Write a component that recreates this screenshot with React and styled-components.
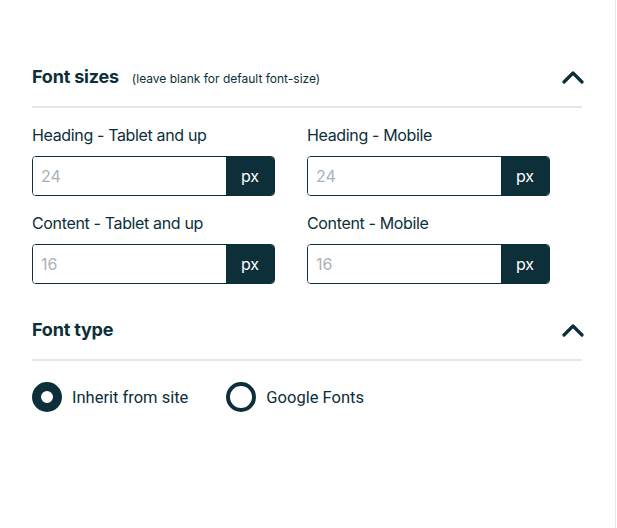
import React from 'react';
import styled, { createGlobalStyle } from 'styled-components';

const dark = '#0c2f3a';

const GlobalStyle = createGlobalStyle`
  html, body {
    margin: 0;
    padding: 0;
    background: #ffffff;
  }
  body {
    font-family: Inter, "Liberation Sans", sans-serif;
    color: ${dark};
  }
`;

const Page = styled.div`
  width: 616px;
  height: 528px;
  box-sizing: border-box;
  border-right: 1px solid #e6e8e9;
  padding: 60px 33px 0 32px;
`;

const Section = styled.section`
  & + & {
    margin-top: 29px;
  }
`;

const SectionHeader = styled.div`
  display: flex;
  align-items: center;
  justify-content: space-between;
  padding-bottom: 12px;
  border-bottom: 2px solid #e4e6e7;
`;

const TitleGroup = styled.div`
  display: flex;
  align-items: baseline;
  gap: 13px;
`;

const Title = styled.h2`
  margin: 0;
  font-size: 18px;
  font-weight: 700;
  letter-spacing: -0.2px;
  line-height: 34px;
`;

const Hint = styled.span`
  font-size: 12px;
  font-weight: 400;
`;

const Chevron = styled.button`
  display: flex;
  align-items: center;
  justify-content: center;
  width: 24px;
  height: 24px;
  padding: 0;
  margin-right: -3px;
  border: none;
  background: transparent;
  color: ${dark};
`;

const Grid = styled.div`
  display: grid;
  grid-template-columns: 243px 243px;
  column-gap: 32px;
  row-gap: 16px;
  padding-top: 16px;
`;

const Field = styled.div`
  display: flex;
  flex-direction: column;
  gap: 10px;
`;

const Label = styled.label`
  font-size: 16px;
  line-height: 22px;
  font-weight: 400;
  letter-spacing: -0.35px;
`;

const InputGroup = styled.div`
  display: flex;
  height: 40px;
  box-sizing: border-box;
  border: 1px solid ${dark};
  border-radius: 4px;
  overflow: hidden;
`;

const NumberInput = styled.input`
  flex: 1;
  min-width: 0;
  border: none;
  outline: none;
  padding: 0 8px;
  font-family: Inter, "Liberation Sans", sans-serif;
  font-size: 16px;
  color: ${dark};
  &::placeholder {
    color: #a9b2bb;
  }
`;

const Unit = styled.span`
  width: 48px;
  display: flex;
  align-items: center;
  justify-content: center;
  background: ${dark};
  color: #ffffff;
  font-size: 16px;
`;

const RadioRow = styled.div`
  display: flex;
  align-items: center;
  gap: 38px;
  padding-top: 21px;
`;

const RadioOption = styled.label`
  display: flex;
  align-items: center;
  gap: 10px;
  font-family: Roboto, Inter, sans-serif;
  font-size: 16.5px;
`;

const RadioDot = styled.span`
  width: 30px;
  height: 30px;
  box-sizing: border-box;
  border-radius: 50%;
  border: ${(p) => (p.checked ? '9px' : '4px')} solid ${dark};
`;

const ChevronUp = () => (
  <svg width="22" height="14" viewBox="0 0 22 14" fill="none">
    <path d="M2 12 L11 3 L20 12" stroke="currentColor" strokeWidth="3.2" strokeLinecap="round" strokeLinejoin="round" />
  </svg>
);

const fields = [
  { label: 'Heading - Tablet and up', placeholder: '24' },
  { label: 'Heading - Mobile', placeholder: '24' },
  { label: 'Content - Tablet and up', placeholder: '16' },
  { label: 'Content - Mobile', placeholder: '16' }
];

const App = () => (
  <>
    <GlobalStyle />
    <Page>
      <Section>
        <SectionHeader>
          <TitleGroup>
            <Title>Font sizes</Title>
            <Hint>(leave blank for default font-size)</Hint>
          </TitleGroup>
          <Chevron aria-label="Collapse">
            <ChevronUp />
          </Chevron>
        </SectionHeader>
        <Grid>
          {fields.map((f) => (
            <Field key={f.label}>
              <Label>{f.label}</Label>
              <InputGroup>
                <NumberInput type="text" placeholder={f.placeholder} />
                <Unit>px</Unit>
              </InputGroup>
            </Field>
          ))}
        </Grid>
      </Section>
      <Section>
        <SectionHeader>
          <Title>Font type</Title>
          <Chevron aria-label="Collapse">
            <ChevronUp />
          </Chevron>
        </SectionHeader>
        <RadioRow>
          <RadioOption>
            <RadioDot checked />
            Inherit from site
          </RadioOption>
          <RadioOption>
            <RadioDot />
            Google Fonts
          </RadioOption>
        </RadioRow>
      </Section>
    </Page>
  </>
);

export default App;
